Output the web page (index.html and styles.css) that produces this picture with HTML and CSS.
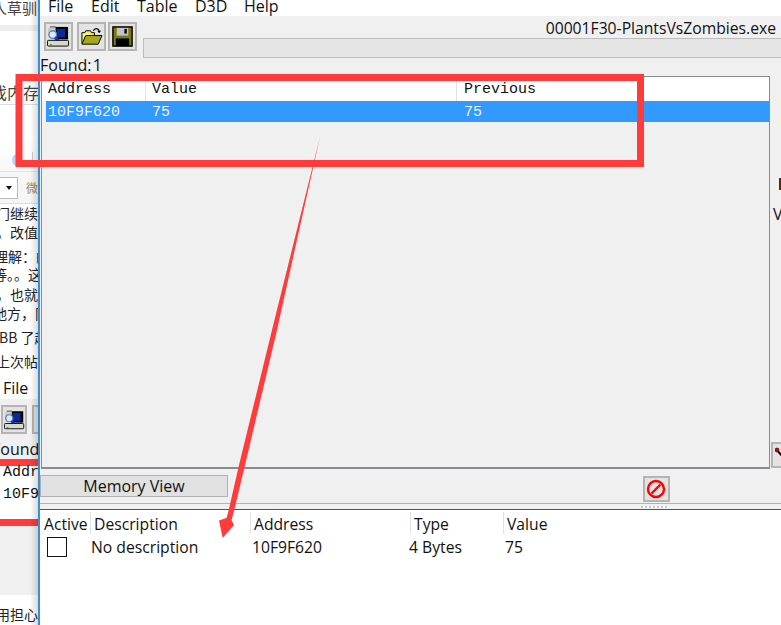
FILE: index.html
```html
<!DOCTYPE html>
<html lang="en">
<head>
<meta charset="utf-8">
<title>Cheat Engine</title>
<link rel="stylesheet" href="styles.css">
</head>
<body>
<div class="desk">
  <section class="back">
    <div class="bk-title">人草驯</div>
    <div class="bk-band"></div>
    <div class="bk-head">戏内存</div>
    <div class="bk-tools">
      <div class="bk-search"><span class="bk-globe"></span><span class="bk-vr"></span></div>
      <div class="bk-editor"><span class="bk-select"><i class="bk-arrow"></i></span><span class="bk-font">微</span></div>
    </div>
    <div class="bk-text">
      <p class="l1">门继续地</p>
      <p class="l2">，改值法</p>
      <p class="l3">理解：的</p>
      <p class="l4">等。。这</p>
      <p class="l5">，也就是</p>
      <p class="l6">地方，同</p>
      <p class="l7">BB 了起来</p>
      <p class="l8">上次帖子</p>
    </div>
    <div class="bk-shot">
      <div class="bk-menu">File</div>
      <div class="bk-tb">
        <span class="bk-btn"><svg class="bk-ico" viewBox="0 0 24 24"><use href="#i-comp"/></svg></span>
        <span class="bk-btn2"></span>
      </div>
      <div class="bk-found">Found</div>
      <div class="bk-red"></div>
      <div class="bk-list">
        <div class="bk-addr">Addr</div>
        <div class="bk-val">10F9</div>
      </div>
      <div class="bk-red"></div>
      <div class="bk-gray"></div>
    </div>
    <div class="bk-foot">用担心</div>
  </section>

  <section class="win">
    <nav class="menu">
      <span class="m1">File</span><span class="m2">Edit</span><span class="m3">Table</span><span class="m4">D3D</span><span class="m5">Help</span>
    </nav>
    <div class="body">
      <div class="toolbar">
        <button class="tbtn">
          <svg class="ico" viewBox="0 0 24 24">
            <defs><g id="i-comp">
              <rect x="8" y="2" width="14" height="13" fill="#000"/>
              <rect x="10" y="4" width="9" height="9" fill="#0a2a9a"/>
              <rect x="3" y="1" width="6" height="2" fill="#8a8a8a"/>
              <rect x="1" y="3" width="8" height="9" fill="#c8ccd0"/>
              <circle cx="6" cy="10" r="4" fill="#dfe8f4" stroke="#5b7fb5" stroke-width="1.4"/>
              <path d="M8.500 13l7 7" stroke="#0a3ce0" stroke-width="3"/>
              <rect x="0.500" y="16" width="22" height="6" rx="1" fill="#d8d8cc" stroke="#000"/>
              <rect x="3" y="20" width="2" height="1" fill="#1a9a1a"/>
            </g></defs>
            <use href="#i-comp"/>
          </svg>
        </button>
        <button class="tbtn">
          <svg class="ico" viewBox="0 0 24 24">
            <path d="M14 6c1-3 5-3 6 0" fill="none" stroke="#000" stroke-width="1.300"/>
            <path d="M18 6h4l-2 2.500z" fill="#000"/>
            <path d="M2 19V8h3l1-2h5l1 2h3v3" fill="#f6ee50" stroke="#000"/>
            <path d="M3 9h7v2H3z" fill="#fff" opacity=".55"/>
            <path d="M2 20l4-9h17l-4 9z" fill="#a8a820" stroke="#000"/>
          </svg>
        </button>
        <button class="tbtn">
          <svg class="ico" viewBox="0 0 24 24">
            <rect x="2" y="2" width="20" height="20" fill="#7a7a10" stroke="#000" stroke-width="1.500"/>
            <rect x="6" y="3" width="12" height="8" fill="#c4c4c4"/>
            <rect x="14" y="4" width="2.500" height="5" fill="#000"/>
            <rect x="5" y="14" width="14" height="8" fill="#000"/>
          </svg>
        </button>
        <div class="progress-wrap">
          <div class="proc">00001F30-PlantsVsZombies.exe</div>
          <div class="progress"></div>
        </div>
      </div>
      <div class="found">Found: 1</div>
      <div class="list">
        <div class="row head">
          <span class="c-a bar">Address</span><span class="c-v bar">Value</span><span class="c-p">Previous</span>
        </div>
        <div class="row sel">
          <span class="c-a">10F9F620</span><span class="c-v">75</span><span class="c-p">75</span>
        </div>
      </div>
      <div class="actions">
        <button class="memview">Memory View</button>
        <button class="stop">
          <svg class="stop-ico" viewBox="0 0 20 20">
            <circle cx="10" cy="10" r="8" fill="none" stroke="#f00" stroke-width="2.400"/>
            <path d="M5.500 14.500L14.500 5.500" stroke="#f00" stroke-width="2.400"/>
          </svg>
        </button>
      </div>
      <div class="splitter"><span class="grip"></span></div>
    </div>
    <div class="table">
      <div class="t-head">
        <span class="h-active">Active</span><span class="h-desc">Description</span><span class="h-addr">Address</span><span class="h-type">Type</span><span class="h-val">Value</span>
      </div>
      <div class="t-row">
        <span class="check"></span><span class="r-desc">No description</span><span class="r-addr">10F9F620</span><span class="r-type">4 Bytes</span><span class="r-val">75</span>
      </div>
    </div>
    <div class="side-mark"></div>
    <div class="side-v">V</div>
    <button class="side-btn">
      <svg class="side-ico" viewBox="0 0 10 16"><path d="M1 2l7 8" stroke="#000" stroke-width="2"/><circle cx="2" cy="3" r="2" fill="#e00" stroke="#000" stroke-width=".6"/><path d="M6 12h4" stroke="#000" stroke-width="3"/></svg>
    </button>
  </section>

  <svg class="anno" viewBox="0 0 781 625">
    <rect class="anno-box" x="19" y="77.500" width="621.500" height="86"/>
    <path class="anno-arrow" d="M320 137L299.200 230 277 330 245.500 463 233.500 513 231.500 520 234 525 222.700 538 219 520.600 226.500 518 228 513 239.500 463 272 330 296.800 230z"/>
  </svg>
</div>
</body>
</html>
```

FILE: styles.css
```css
* { box-sizing: border-box; }
html, body { margin: 0; padding: 0; }
body { width: 781px; height: 625px; overflow: hidden; background: #fff; font-family: "Open Sans", "Noto Sans", "Noto Sans CJK SC", sans-serif; color: #111; }
.desk { position: relative; width: 781px; height: 625px; overflow: hidden; }
button { font: inherit; color: inherit; margin: 0; padding: 0; }

/* Back window, seen through the gap at the left */
.back { position: absolute; left: 0; top: 0; width: 38px; height: 625px; background: #fff; overflow: hidden; font-family: "Noto Sans CJK SC", sans-serif; font-size: 14px; white-space: nowrap; display: flex; flex-direction: column; }
.back::after { content: ""; position: absolute; right: 0; top: 0; bottom: 0; width: 8px; background: linear-gradient(to right, rgba(0,0,0,0), rgba(0,0,0,.14)); }
.bk-title { height: 25px; color: #444; font-size: 15px; line-height: 15px; margin-left: -8px; }
.bk-band { height: 6px; background: #eee; }
.bk-head { margin-top: 50px; height: 24px; line-height: 22px; font-size: 16px; color: #444; margin-left: -9px; border-bottom: 1px solid #ddd; }
.bk-tools { height: 99px; flex: none; }
.bk-search { display: flex; align-items: flex-end; height: 67px; padding-bottom: 5px; border-bottom: 1px solid #e2e2e2; background: linear-gradient(#fff 50%, #f8f8f8); }
.bk-globe { width: 10px; height: 12px; margin-left: 12px; border-radius: 50%; background: #b9d4ee; }
.bk-vr { width: 1px; height: 14px; background: #ccc; margin-left: 10px; }
.bk-editor { display: flex; align-items: center; height: 32px; background: #f6f6f6; border-bottom: 1px solid #ddd; }
.bk-select { display: flex; align-items: center; justify-content: flex-end; width: 24px; height: 22px; background: #fff; border: 1px solid #bbb; border-left: 0; padding-right: 5px; }
.bk-arrow { width: 0; height: 0; border: 3px solid transparent; border-top: 4px solid #111; border-bottom: 0; }
.bk-font { font-size: 12px; color: #9a8a50; margin-left: 8px; }
.bk-text { flex: none; }
.bk-text p { margin: 0; height: 18px; font-size: 14px; line-height: 18px; color: #222; }
.bk-text .l1 { margin-left: -4px; }
.bk-text .l2 { margin-top: 1px; margin-left: -4px; }
.bk-text .l3 { margin-top: 6px; margin-left: -6px; }
.bk-text .l4 { margin-left: -7px; }
.bk-text .l5 { margin-top: 2px; margin-left: -4px; }
.bk-text .l6 { margin-top: 1px; margin-left: -7px; }
.bk-text .l7 { margin-top: 6px; margin-left: -1px; }
.bk-text .l8 { margin-top: 6px; margin-left: -4px; }
.bk-shot { margin-top: 7px; flex: none; }
.bk-menu { font-family: "Open Sans", sans-serif; font-size: 16px; line-height: 22px; height: 22px; margin-left: 3px; }
.bk-tb { display: flex; gap: 5px; height: 40px; align-items: flex-start; padding-top: 6px; background: #f0f0f0; }
.bk-btn { display: flex; align-items: center; justify-content: center; width: 26px; height: 29px; margin-left: 1px; flex: none; border: 2px solid #b4b4b4; background: #e3e3e3; }
.bk-ico { width: 21px; height: 24px; display: block; flex: none; }
.bk-btn2 { width: 10px; height: 29px; flex: none; border: 2px solid #b4b4b4; background: #e3e3e3; }
.bk-found { font-family: "Open Sans", sans-serif; font-size: 16px; margin-left: -8px; background: #f0f0f0; height: 20px; line-height: 20px; }
.bk-red { height: 7px; background: #ff3b3b; }
.bk-list { background: #fff; height: 53px; font-family: "Liberation Mono", monospace; font-size: 15px; padding-left: 3px; }
.bk-addr { height: 21px; line-height: 13px; }
.bk-val { height: 32px; line-height: 16px; }
.bk-gray { height: 69px; background: #f0f0f0; }
.bk-foot { font-size: 14px; margin-top: auto; margin-bottom: 1px; margin-left: -4px; color: #222; }

/* Front window */
.win { position: absolute; left: 38px; top: 0; width: 743px; height: 625px; border-left: 2px solid #3a8dd6; background: #fff; overflow: hidden; }
.menu { position: relative; height: 16px; background: #fff; font-size: 16px; }
.menu span { position: absolute; top: -6px; line-height: 24px; }
.m1 { left: 8px; } .m2 { left: 51px; } .m3 { left: 97px; } .m4 { left: 155px; } .m5 { left: 204px; }
.body { height: 493px; background: #f0f0f0; display: flex; flex-direction: column; }
.toolbar { display: flex; height: 44px; padding: 6px 0 0 4px; gap: 2px; flex: none; }
.tbtn { width: 29px; height: 29px; background: #e3e3e3; border: 2px solid #b4b4b4; display: flex; align-items: center; justify-content: center; }
.tbtn:first-child { margin-right: 2px; }
.ico { width: 23px; height: 23px; display: block; }
.progress-wrap { flex: 1; margin-left: 4px; }
.proc { height: 16px; line-height: 13px; font-size: 15.7px; text-align: right; padding-right: 5px; white-space: nowrap; }
.progress { height: 20px; background: #e5e5e5; border: 1px solid #bdbdbd; border-right: 0; }
.found { height: 16px; font-size: 16px; word-spacing: -3px; line-height: 11px; flex: none; }
.list { width: 729px; height: 393px; margin-left: 1px; border: 1px solid #8a8a90; border-bottom-width: 2px; font-family: "Liberation Mono", monospace; font-size: 15px; flex: none; }
.row { display: flex; }
.head { height: 24px; background: #fff; line-height: 25px; color: #111; }
.sel { height: 21px; background: #3399ff; color: #e9f4ff; line-height: 23px; margin-left: 4px; width: 723px; outline: 1px dotted #b97a3a; outline-offset: -1px; }
.head .c-a { width: 104px; padding-left: 6px; }
.head .c-v { width: 311px; padding-left: 6px; }
.head .c-p { padding-left: 7px; }
.sel .c-a { width: 100px; padding-left: 2px; }
.sel .c-v { width: 311px; padding-left: 6px; }
.sel .c-p { padding-left: 7px; }
.bar { border-right: 1px solid #e2e2e2; }
.actions { display: flex; align-items: flex-start; height: 34px; padding-top: 6px; flex: none; }
.memview { width: 188px; height: 22px; background: #e1e1e1; border: 1px solid #b0b0b0; font-size: 16px; line-height: 18px; }
.stop { width: 27px; height: 26px; background: #e3e3e3; border: 2px solid #b4b4b4; margin-left: 415px; margin-top: 1px; padding-right: 2px; display: flex; align-items: center; justify-content: center; }
.stop-ico { width: 20px; height: 20px; display: block; flex: none; }
.splitter { position: relative; height: 1px; background: #b4b4b4; flex: none; }
.grip { position: absolute; left: 601px; top: 3px; width: 28px; height: 2px; background: repeating-linear-gradient(to right, #c8c8c8 0 2px, #fff 2px 4px); }
.table { position: relative; height: 116px; background: #fff; border-top: 1px solid #555; font-size: 15.7px; }
.t-head { position: relative; height: 24px; }
.t-head span { position: absolute; top: 2px; height: 22px; line-height: 24px; padding-left: 3px; border-left: 1px solid #e2e2e2; white-space: nowrap; }
.t-head .h-active { left: 4px; border-left: 0; padding-left: 0; width: 46px; overflow: hidden; }
.h-desc { left: 50px; }
.h-addr { left: 210px; }
.h-type { left: 370px; }
.h-val { left: 463px; }
.t-row { position: relative; height: 40px; }
.t-row span { position: absolute; top: 0; line-height: 26px; white-space: nowrap; }
.t-row .check { left: 7px; top: 3px; width: 20px; height: 20px; border: 1px solid #111; background: #fff; }
.r-desc { left: 51px; }
.r-addr { left: 212px; }
.r-type { left: 369px; }
.r-val { left: 465px; }
.side-mark { position: absolute; left: 739px; top: 178px; width: 2px; height: 12px; background: #5a2a00; }
.side-v { position: absolute; left: 733px; top: 205px; font-size: 16px; line-height: 18px; }
.side-btn { position: absolute; left: 731px; top: 442px; width: 14px; height: 26px; background: #e3e3e3; border: 2px solid #b4b4b4; display: flex; align-items: center; justify-content: flex-start; padding-left: 2px; }
.side-ico { width: 10px; height: 16px; display: block; flex: none; }

/* Annotations */
.anno { position: absolute; left: 0; top: 0; width: 781px; height: 625px; pointer-events: none; }
.anno-box { fill: none; stroke: #ff3b3b; stroke-width: 7; }
.anno-arrow { fill: #ff3b3b; }
```
